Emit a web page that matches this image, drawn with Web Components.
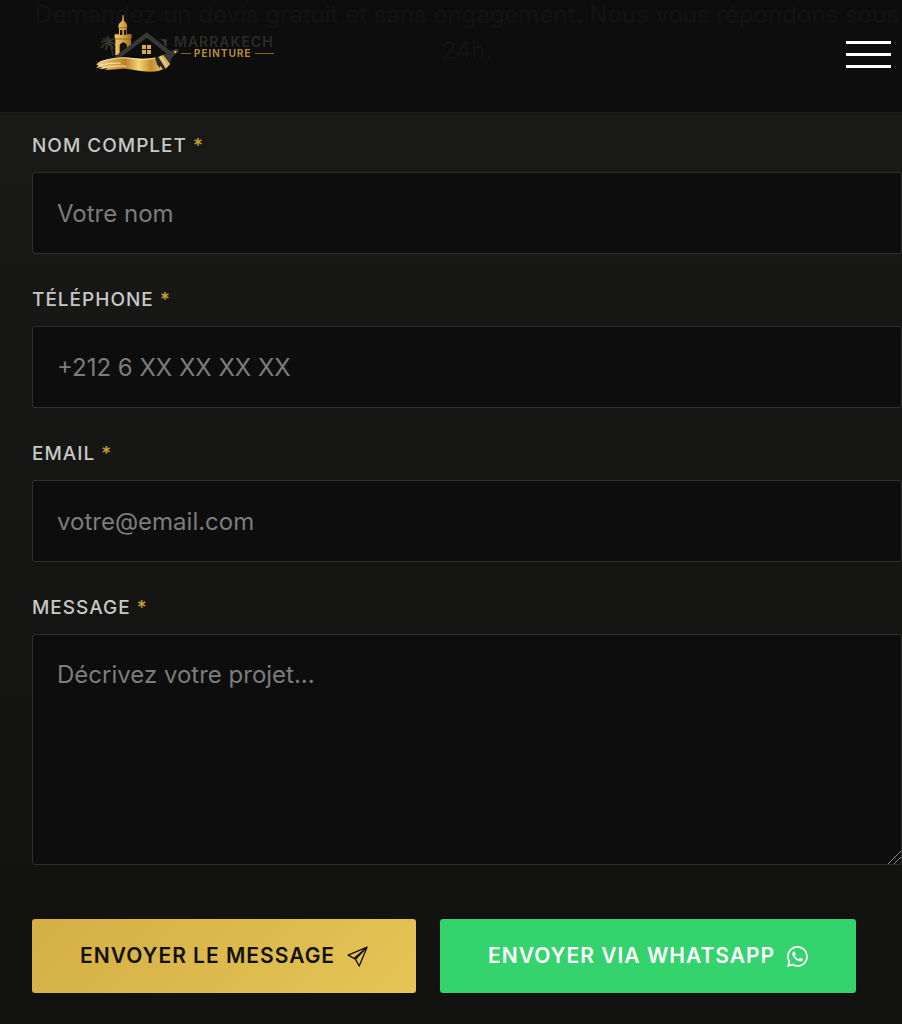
<!DOCTYPE html>
<html lang="fr">
<head>
<meta charset="utf-8">
<meta name="viewport" content="width=device-width, initial-scale=1">
<title>Marrakech Peinture – Contact</title>
<style>
  html { background: #11110f; }
  body {
    margin: 0;
    font-family: Inter, "Liberation Sans", sans-serif;
    color: #c8c8c5;
    background: linear-gradient(180deg, #1a1a18 0, #181816 200px, #11110f 1000px);
    overflow-x: hidden;
  }
</style>
</head>
<body>
<site-header></site-header>
<contact-section>
  <p slot="lead" style="margin:0">Demandez un devis gratuit et sans engagement. Nous vous répondons sous 24h.</p>
  <form-field label="Nom complet" kind="text" placeholder="Votre nom"></form-field>
  <form-field label="Téléphone" kind="tel" placeholder="+212 6 XX XX XX XX"></form-field>
  <form-field label="Email" kind="email" placeholder="votre@email.com"></form-field>
  <form-field label="Message" kind="area" placeholder="Décrivez votre projet..."></form-field>
  <action-button slot="actions" variant="gold">Envoyer le message
    <svg slot="icon" width="21" height="21" viewBox="0 0 22 22" fill="none" stroke="currentColor" stroke-width="1.4" stroke-linejoin="round"><path d="M21 1.200 1.200 9.600l7.600 4.200 4 7.200zM21 1.200 8.800 13.800M21 1.200 7.400 13"/></svg>
  </action-button>
  <action-button slot="actions" variant="green">Envoyer via WhatsApp
    <svg slot="icon" width="21" height="21" viewBox="0 0 16 16" fill="currentColor"><path d="M13.601 2.326A7.85 7.85 0 0 0 7.994 0C3.627 0 .068 3.558.064 7.926c0 1.399.366 2.76 1.057 3.965L0 16l4.204-1.102a7.9 7.9 0 0 0 3.79.965h.004c4.368 0 7.926-3.558 7.93-7.93A7.9 7.9 0 0 0 13.6 2.326zM7.994 14.521a6.6 6.6 0 0 1-3.356-.92l-.24-.144-2.494.654.666-2.433-.156-.251a6.56 6.56 0 0 1-1.007-3.505c0-3.626 2.957-6.584 6.591-6.584a6.56 6.56 0 0 1 4.66 1.931 6.56 6.56 0 0 1 1.928 4.66c-.004 3.639-2.961 6.592-6.592 6.592m3.615-4.934c-.197-.099-1.17-.578-1.353-.646-.182-.065-.315-.099-.445.099-.133.197-.513.646-.627.775-.114.133-.232.148-.43.05-.197-.1-.836-.308-1.592-.985-.59-.525-.985-1.175-1.103-1.372-.114-.198-.011-.304.088-.403.087-.088.197-.232.296-.346.1-.114.133-.198.198-.33.065-.134.034-.248-.015-.347-.05-.099-.445-1.076-.612-1.47-.16-.389-.323-.335-.445-.34-.114-.007-.247-.007-.38-.007a.73.73 0 0 0-.529.247c-.182.198-.691.677-.691 1.654s.71 1.916.81 2.049c.098.133 1.394 2.132 3.383 2.992.47.205.84.326 1.129.418.475.152.904.129 1.246.08.38-.058 1.171-.48 1.338-.943.164-.464.164-.86.114-.943-.049-.084-.182-.133-.38-.232"/></svg>
  </action-button>
</contact-section>

<script>
const define = (name, html, setup) => {
  const template = document.createElement('template');
  template.innerHTML = html;
  customElements.define(name, class extends HTMLElement {
    constructor() {
      super();
      this.attachShadow({ mode: 'open' }).append(template.content.cloneNode(true));
    }
    connectedCallback() { if (setup) setup(this, this.shadowRoot); }
  });
};

define('brand-logo', `
<style>
  :host { display: block; }
  a { display: flex; align-items: center; text-decoration: none; font-family: Inter, sans-serif; }
  svg { display: block; flex: none; }
  .words { display: grid; margin: 0 0 0 -6px; padding-top: 8px; }
  .name { font-size: 14px; line-height: 12px; font-weight: 600; letter-spacing: 1px; color: #2b2b28; }
  .sub { display: flex; align-items: center; gap: 3px; padding-left: 7px; font-size: 10px; line-height: 10px; font-weight: 700; letter-spacing: 1px; color: #b98a36; }
  .sub::before, .sub::after { content: ""; height: 1px; background: #8d6425; }
  .sub::before { width: 10px; }
  .sub::after { flex: 1; }
</style>
<a href="#">
  <svg width="84" height="60" viewBox="48 39 252 180" aria-hidden="true">
    <defs>
      <linearGradient id="gold" x1="0" x2="1"><stop offset="0" stop-color="#f0cb70"/><stop offset=".5" stop-color="#d9a441"/><stop offset="1" stop-color="#9c6a22"/></linearGradient>
      <linearGradient id="paint" x1="0" x2="1"><stop offset="0" stop-color="#f3d78d"/><stop offset=".25" stop-color="#dca543"/><stop offset=".42" stop-color="#b98027"/><stop offset=".62" stop-color="#f6d571"/><stop offset=".8" stop-color="#c58d2e"/><stop offset="1" stop-color="#efcb70"/></linearGradient>
    </defs>
    <g fill="none" stroke="#353530" stroke-width="5">
      <path d="M88 129q-12-12-24-2M88 129q-6-18-19-12M88 129q2-18-7-20M88 129q7-16 18-9M88 129q14-5 19 9M88 129q-19 0-23 15M88 129q-10 8-10 20M88 129q10 6 11 18"/>
      <path d="M88 129q8 15 11 38" stroke-width="4"/>
    </g>
    <path fill="url(#gold)" d="M128 45h3l1 17 8 9 2 12h-2v20h15v12h-2v50h-47v-50h-2v-12h13V83h-3l3-12 9-9z"/>
    <path fill="#17140e" d="M120 90h7v15h-7zM132 90h6v15h-6zM119 162v-27q11-17 22 0v27z"/>
    <path fill="none" stroke="#805318" stroke-width="2" d="M117 83h24M105 117h47"/>
    <path fill="#0d0d0d" d="M118 170l83-59 75 58z"/>
    <path fill="#393933" d="M103 171l97-74 72 57-11 8-61-49-77 58zM240 118h20v22l-8-6v-8z"/>
    <path fill="#dda94d" d="M186 135h12v12h-12zM201 135h12v12h-12zM186 150h12v12h-12zM201 150h12v12h-12z"/>
    <path fill="url(#paint)" d="M57 186q55-18 98-12c38 5 58 1 82-3l18 33c-20 13-42 13-73 9-26-4-43-8-61-6l-46 3 9-5-29 2 14-6-21 2 10-8-10-1z"/>
    <path fill="none" stroke="#fae8b5" stroke-width="3" d="M61 185q49-16 93-10c34 5 51 3 72-1M55 197q39-10 67-8M64 205q44-10 75-6"/>
    <path fill="#272722" d="M225 173l19-8 19 38-15 4-7-10-1 7-8-10 2 8z"/>
    <path fill="#d9b15e" d="M235 171l15-7 21 28-14 14z"/>
    <path fill="none" stroke="#f5e9c5" stroke-width="3" d="M241 169l20 32"/>
    <path fill="#393933" d="M250 164q15-3 23-12l17-6q8 1 7 8l-20 17-8 18z"/>
    <circle cx="286" cy="156" r="3.500" fill="#e3bd68"/>
  </svg>
  <span class="words"><span class="name">MARRAKECH</span><span class="sub">PEINTURE</span></span>
</a>`);

define('site-header', `
<style>
  :host {
    position: fixed; inset: 0 0 auto; z-index: 2; box-sizing: border-box;
    display: flex; align-items: center; justify-content: space-between;
    min-height: 113px; padding: 0 11px 3px 96px;
    background: rgba(13, 13, 13, .97); border-bottom: 1px solid #231d0e;
  }
  brand-logo { margin-bottom: 23px; }
  button { display: grid; gap: 9px; width: 45px; padding: 0; border: 0; background: none; cursor: pointer; }
  span { height: 3px; background: #fff; }
</style>
<brand-logo></brand-logo>
<button type="button" aria-label="Menu"><span></span><span></span><span></span></button>`);

define('contact-section', `
<style>
  :host { display: block; padding: 0 0 31px 32px; }
  .lead { margin-top: -3px; padding-bottom: 61px; font-size: 24px; line-height: 36px; text-align: center; color: #b5b5b0; }
  form { display: grid; gap: 30px; }
  .actions { display: flex; flex-wrap: wrap; gap: 24px; padding-top: 24px; }
</style>
<div class="lead"><slot name="lead"></slot></div>
<form><slot></slot><div class="actions"><slot name="actions"></slot></div></form>`);

define('form-field', `
<style>
  :host { display: grid; gap: 10px; }
  label { font-size: 19px; line-height: 32px; font-weight: 500; letter-spacing: 1px; text-transform: uppercase; color: #c8c8c5; }
  label span { color: #c9a13b; }
  input, textarea {
    display: block; box-sizing: border-box; width: 100%; margin: 0; padding: 0 24px;
    border: 1px solid #2f2f2f; border-radius: 3px; outline: 0;
    background: #0d0d0d; color: #fff; font: 400 24px/36px Inter, sans-serif;
  }
  input { height: 82px; }
  textarea { height: 231px; padding-top: 22px; resize: vertical; }
  textarea::-webkit-resizer {
    background: linear-gradient(135deg, transparent 54%, #8a8a8a 55%, #8a8a8a 59%, transparent 60%, transparent 74%, #8a8a8a 75%, #8a8a8a 79%, transparent 80%);
  }
  ::placeholder { color: #7c7c7c; opacity: 1; }
</style>
<label for="control"><b style="font-weight:inherit"></b> <span>*</span></label>`, (host, root) => {
  if (root.getElementById('control')) return;
  const kind = host.getAttribute('kind');
  root.querySelector('b').textContent = host.getAttribute('label');
  const control = document.createElement(kind === 'area' ? 'textarea' : 'input');
  if (kind !== 'area') control.type = kind;
  control.id = 'control';
  control.required = true;
  control.placeholder = host.getAttribute('placeholder');
  root.append(control);
});

define('action-button', `
<style>
  :host { display: block; }
  button {
    display: flex; align-items: center; gap: 12px; height: 74px; padding: 0 48px;
    border: 0; border-radius: 3px; cursor: pointer; white-space: nowrap;
    font: 600 21px/32px Inter, sans-serif; letter-spacing: 1px; text-transform: uppercase;
    background: linear-gradient(135deg, #d4af45, #e6c455); color: #11110d;
  }
  :host([variant="green"]) button { background: #34d36d; color: #fff; }
  ::slotted(svg) { display: block; flex: none; }
</style>
<button type="button"><span><slot></slot></span><slot name="icon"></slot></button>`);
</script>
</body>
</html>
